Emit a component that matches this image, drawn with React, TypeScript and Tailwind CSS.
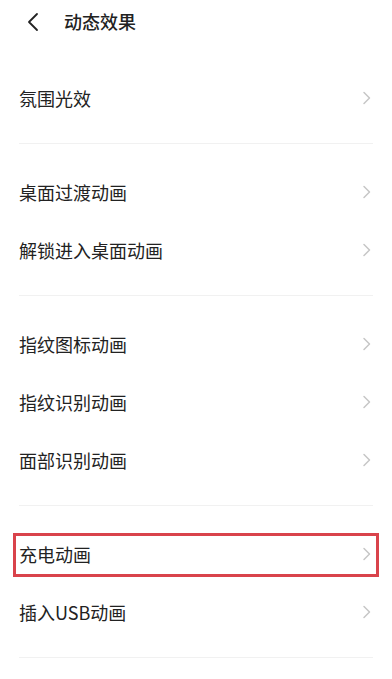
const groups: { label: string; highlight?: boolean }[][] = [
  [{ label: '氛围光效' }],
  [{ label: '桌面过渡动画' }, { label: '解锁进入桌面动画' }],
  [{ label: '指纹图标动画' }, { label: '指纹识别动画' }, { label: '面部识别动画' }],
  [{ label: '充电动画', highlight: true }, { label: '插入USB动画' }],
];

function Chevron() {
  return (
    <svg width="10" height="14" viewBox="0 0 10 14" fill="none" className="shrink-0">
      <path d="M2 1.5L7.5 7L2 12.5" stroke="#c6c6c6" strokeWidth="1.5" strokeLinecap="round" strokeLinejoin="round" />
    </svg>
  );
}

export default function App() {
  return (
    <div
      className="w-[392px] h-[679px] bg-white overflow-hidden text-[#222]"
      style={{ fontFamily: '"Noto Sans CJK SC", "Noto Sans", sans-serif' }}
    >
      {/* Header */}
      <div className="h-[44px] flex items-center">
        <div className="w-[64px] flex items-center pl-[26px]">
          <svg width="14" height="20" viewBox="0 0 14 20" fill="none">
            <path d="M11 2L3 10L11 18" stroke="#222" strokeWidth="1.8" strokeLinecap="round" strokeLinejoin="round" />
          </svg>
        </div>
        <span className="text-[18px] font-medium leading-none -mt-[2px]">动态效果</span>
      </div>

      {groups.map((rows, gi) => (
        <div key={gi}>
          <div className={gi === 0 ? 'pt-[25px] pb-[16px]' : 'pt-[19px] pb-[16px]'}>
            {rows.map((row) => (
              <div key={row.label} className="relative h-[58px] flex items-center justify-between pl-[19px] pr-[20px]">
                <span className="text-[18px] leading-none">{row.label}</span>
                <Chevron />
                {row.highlight && (
                  <div className="absolute left-[13px] right-[13px] top-[8px] bottom-[6px] border-[3px] border-[#d9434b]" />
                )}
              </div>
            ))}
          </div>
          <div className="mx-[19px] h-px bg-[#f1f1f1]" />
        </div>
      ))}
    </div>
  );
}
